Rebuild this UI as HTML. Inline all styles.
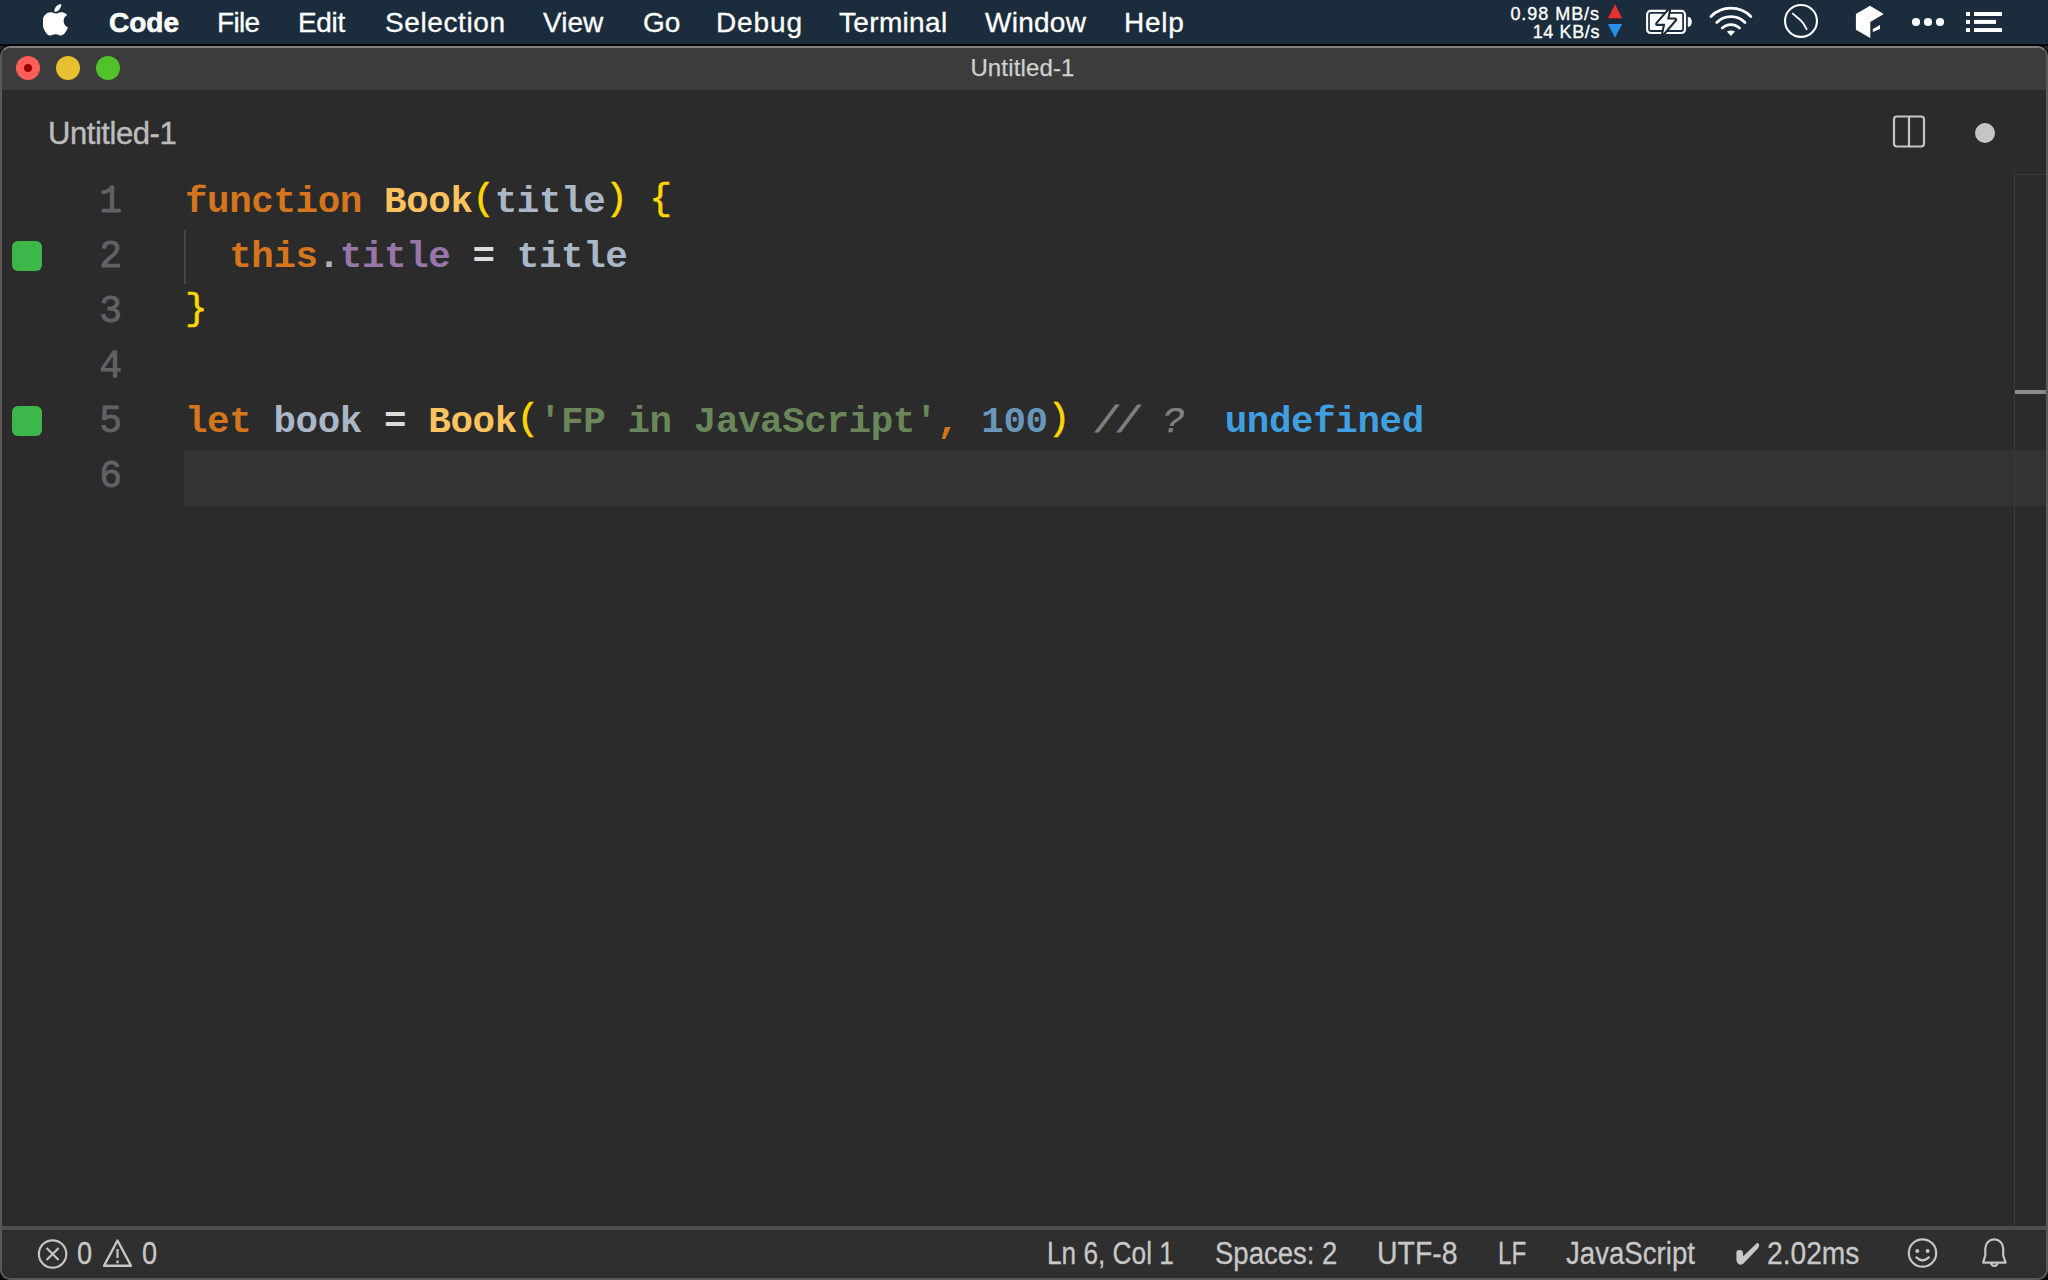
<!DOCTYPE html>
<html><head><meta charset="utf-8">
<style>
html,body{margin:0;padding:0;}
body{width:2048px;height:1280px;position:relative;overflow:hidden;background:linear-gradient(#1b2d3c 0,#1b2d3c 60px,#05080b 60px);font-family:"Liberation Sans",sans-serif;}
.abs{position:absolute;}
#menubar{left:0;top:0;width:2048px;height:44px;background:#1b2d3c;}
.mi{position:absolute;top:1px;height:44px;line-height:44px;font-size:28px;color:#fff;white-space:nowrap;-webkit-text-stroke:0.3px #fff;}
#win{left:0;top:46px;width:2048px;height:1234px;border-radius:10px;box-shadow:0 0 0 1px #000;overflow:hidden;background:#2b2b2b;}
#wintop{left:0;top:0;width:2048px;height:2px;background:#808080;}
#titlebar{left:0;top:2px;width:2048px;height:42px;background:#3c3c3c;}
.tl{position:absolute;width:24px;height:24px;border-radius:50%;top:8px;}
#title{position:absolute;left:-1.5px;width:2048px;text-align:center;top:-1.5px;height:42px;line-height:42px;font-size:24px;color:#d0d0d0;letter-spacing:0.15px;-webkit-text-stroke:0.25px #d0d0d0;}
#editor{left:0;top:44px;width:2048px;height:1136px;background:#2b2b2b;}
#tab{position:absolute;left:48px;top:0.5px;height:85px;line-height:85px;font-size:31px;letter-spacing:-0.45px;color:#bcbcbc;-webkit-text-stroke:0.4px #bcbcbc;}
.code{position:absolute;left:185px;height:55px;line-height:55px;font-family:"Liberation Mono",monospace;font-weight:bold;font-size:37.5px;letter-spacing:-0.385px;white-space:pre;color:#a9b7c6;}
.ln{position:absolute;left:61px;width:61px;margin-top:-1px;text-align:right;height:55px;line-height:55px;font-family:"Liberation Mono",monospace;font-weight:normal;font-size:38px;color:#606366;-webkit-text-stroke:0.8px #606366;}
.gm{position:absolute;left:12px;width:30px;height:30px;border-radius:6px;background:#3cb74a;}
.kw{color:#d5761e}.fn{color:#fdc35f}.br{color:#ffd700;font-weight:normal;position:relative;top:-3px;-webkit-text-stroke:0.6px #ffd700}.pr{color:#9876aa}.st{color:#6a8759}.nm{color:#6897bb}.cm{color:#808080}.qk{color:#409fe0}.op{color:#dcdcdc}
#status{left:0;top:1180px;width:2048px;height:54px;background:#2f2f2f;}
#bborder{left:0;top:1232px;width:2048px;height:2px;background:#5a5a5a;}
.si{position:absolute;top:3px;height:50px;line-height:50px;font-size:31px;color:#c8c8c8;white-space:nowrap;transform-origin:0 0;-webkit-text-stroke:0.3px #c8c8c8;}
#lborder{left:0;top:0;width:2px;height:1234px;background:#5c5c5c;}
#rborder{right:0;top:0;width:2px;height:1234px;background:#585858;}
</style></head><body>
<div id="menubar" class="abs">
  <svg class="abs" style="left:42.5px;top:4px" width="27" height="32" viewBox="0 0 26 32" preserveAspectRatio="none"><path fill="#fff" d="M17.5 0c.3 2-.5 4-1.7 5.4-1.2 1.4-3 2.4-4.8 2.3-.3-1.9.6-3.9 1.7-5.2C13.9 1.1 15.900.2 17.5 0zM23.3 10.900c-.3.2-3.500 2-3.400 6 0 4.700 4.100 6.300 4.100 6.300-.1.3-.7 2.300-2.100 4.500-1.300 1.900-2.700 3.800-4.800 3.800-2.100 0-2.700-1.200-5.100-1.200-2.400 0-3.100 1.200-5 1.300-2 .1-3.500-2-4.800-3.900C-.3 23.800-1.800 16.600 1.100 12.100c1.400-2.300 3.800-3.700 6.400-3.800 2-.1 3.800 1.300 5 1.300s3.100-1.600 5.300-1.400c.9 0 3.500.4 5.500 2.700z"/></svg>
  <div class="mi" style="left:109px;font-weight:bold;-webkit-text-stroke:0.6px #fff">Code</div>
  <div class="mi" style="left:217px;letter-spacing:-0.67px">File</div>
  <div class="mi" style="left:298px;letter-spacing:-0.33px">Edit</div>
  <div class="mi" style="left:385px;letter-spacing:0.6px">Selection</div>
  <div class="mi" style="left:543px">View</div>
  <div class="mi" style="left:643px">Go</div>
  <div class="mi" style="left:716px;letter-spacing:0.87px">Debug</div>
  <div class="mi" style="left:839px;letter-spacing:0.33px">Terminal</div>
  <div class="mi" style="left:985px;letter-spacing:0.27px">Window</div>
  <div class="mi" style="left:1124px;letter-spacing:0.77px">Help</div>

  <div class="abs" style="left:1450px;top:5px;width:150px;text-align:right;font-size:18px;line-height:18px;color:#fff;letter-spacing:0.95px;-webkit-text-stroke:0.35px #fff;white-space:nowrap">0.98 MB/s</div>
  <div class="abs" style="left:1450px;top:23px;width:150px;text-align:right;font-size:18px;line-height:18px;color:#fff;letter-spacing:0.6px;-webkit-text-stroke:0.35px #fff;white-space:nowrap">14 KB/s</div>
  <svg class="abs" style="left:1600px;top:0" width="30" height="44" viewBox="0 0 30 44"><path d="M15 4.2L22.2 18.2H7.9z" fill="#e8302e"/><path d="M7.9 24H22.2L15 37.7z" fill="#2a8fe9"/></svg>
  <svg class="abs" style="left:1640px;top:4px" width="56" height="36" viewBox="0 0 56 36">
    <rect x="7.1" y="6.85" width="37.9" height="22.1" rx="3.5" fill="none" stroke="#fff" stroke-width="2.1"/>
    <rect x="9.85" y="9.7" width="32.35" height="16.2" rx="1" fill="#fff"/>
    <path d="M47.8 12.9h1c1.700 0 3 2.200 3 4.950s-1.300 4.950-3 4.950h-1z" fill="#fff"/>
    <path d="M29 6.2L17.2 19.8H25.3L23.2 29.6L35.2 15.6H27.1z" fill="#fff" stroke="#1b2d3c" stroke-width="4.2" stroke-linejoin="round"/><path d="M29 6.2L17.2 19.8H25.3L23.2 29.6L35.2 15.6H27.1z" fill="#fff"/>
  </svg>
  <svg class="abs" style="left:1705px;top:2px" width="52" height="40" viewBox="0 0 52 40" fill="none" stroke="#fff" stroke-width="2.8" stroke-linecap="round">
    <path d="M17.3 26.1A12.2 12.2 0 0 1 34.5 26.1"/>
    <path d="M11.8 20.4A20 20 0 0 1 40 20.4"/>
    <path d="M6 14.4A28.3 28.3 0 0 1 45.8 14.4"/>
    <path d="M21.9 29.6Q25.9 27.600 30 29.6L25.9 34z" fill="#fff" stroke="none"/>
  </svg>
  <svg class="abs" style="left:1780px;top:0" width="42" height="44" viewBox="0 0 42 44" fill="none" stroke="#fff">
    <circle cx="21" cy="20.9" r="15.95" stroke-width="2.1"/>
    <path d="M12.8 13.6L20 19.8Q22 21.6 23.4 23.6L26.7 29.3" stroke-width="1.8" stroke-linecap="round"/>
  </svg>
  <svg class="abs" style="left:1850px;top:2px" width="40" height="40" viewBox="0 0 40 40" fill="#fff">
    <path d="M20 3.75L33.75 11.9L20.3 20V35.9L5.9 27.8V11.9z"/>
    <path d="M22.8 26.9L30 23.1V26.9L22.8 30z"/>
  </svg>
  <svg class="abs" style="left:1900px;top:0" width="148" height="44" viewBox="0 0 148 44" fill="#fff">
    <circle cx="16" cy="22" r="4.1"/><circle cx="28" cy="22" r="4.1"/><circle cx="40" cy="22" r="4.1"/>
    <rect x="66" y="12" width="4" height="4"/><rect x="66" y="19.9" width="4" height="4"/><rect x="66" y="28.1" width="4" height="3.9"/>
    <rect x="74" y="12" width="28" height="4"/><rect x="74" y="19.9" width="22" height="4"/><rect x="74" y="28.1" width="28" height="3.9"/>
  </svg>
</div>
<div class="abs" style="left:0;top:44px;width:2048px;height:2px;background:#000"></div>
<div id="win" class="abs">
  <div id="titlebar" class="abs">
    <div class="tl" style="left:16px;background:#fe5f57"><div style="position:absolute;left:8px;top:8px;width:8px;height:8px;border-radius:50%;background:#990000"></div></div>
    <div class="tl" style="left:56px;background:#e6c02e"></div>
    <div class="tl" style="left:96px;background:#52c22b"></div>
    <div id="title">Untitled-1</div>
  </div>
  <div id="editor" class="abs">
    <div id="tab">Untitled-1</div>
    <svg class="abs" style="left:1892px;top:25px" width="34" height="34" viewBox="0 0 34 34"><rect x="2" y="1.5" width="30" height="30" rx="3" fill="none" stroke="#c5c5c5" stroke-width="2.2"/><line x1="17" y1="1.5" x2="17" y2="31.5" stroke="#c5c5c5" stroke-width="2.2"/></svg>
    <div class="abs" style="left:1975px;top:33px;width:20px;height:20px;border-radius:50%;background:#c5c5c5"></div>
    <div class="abs" style="left:184px;top:360px;width:1862px;height:56px;background:#333333"></div>
    <div class="abs" style="left:2014px;top:84px;width:32px;height:1px;background:#3c3c3c"></div>
    <div class="abs" style="left:2014px;top:84px;width:1px;height:1052px;background:#3c3c3c"></div>
    <div class="abs" style="left:2015px;top:300px;width:31px;height:4px;background:#8c8c8c"></div>
    <div class="abs" style="left:184px;top:140px;width:2px;height:54px;background:#464646"></div>
    <div class="gm" style="top:151px"></div>
    <div class="gm" style="top:316px"></div>
    <div class="ln" style="top:85px">1</div>
    <div class="ln" style="top:140px">2</div>
    <div class="ln" style="top:195px">3</div>
    <div class="ln" style="top:250px">4</div>
    <div class="ln" style="top:305px">5</div>
    <div class="ln" style="top:360px">6</div>
    <div class="code" style="top:85px"><span class="kw">function</span> <span class="fn">Book</span><span class="br">(</span>title<span class="br">)</span> <span class="br">{</span></div>
    <div class="code" style="top:140px">  <span class="kw">this</span><span style="color:#a9b7c6">.</span><span class="pr">title</span> <span class="op">=</span> title</div>
    <div class="code" style="top:195px"><span class="br">}</span></div>
    <div class="code" style="top:305px"><span class="kw">let</span> book <span class="op">=</span> <span class="fn">Book</span><span class="br">(</span><span class="st">'FP in JavaScript'</span><span class="kw">,</span> <span class="nm">100</span><span class="br">)</span> <span class="cm" style="position:relative;left:3px;font-style:italic;font-weight:normal;-webkit-text-stroke:0.9px #808080">//</span> <span class="cm" style="position:relative;left:4px;font-style:italic;font-weight:normal;-webkit-text-stroke:0.5px #808080">?</span>  <span class="qk">undefined</span></div>
  </div>
  <div id="status" class="abs">
    <div class="abs" style="left:0;top:0;width:2048px;height:4px;background:#4d4d4d"></div>
    <svg class="abs" style="left:36px;top:12px" width="34" height="34" viewBox="0 0 34 34"><circle cx="16.6" cy="16" r="13.7" fill="none" stroke="#c5c5c5" stroke-width="2.2"/><path d="M10.6 10l12 12M22.6 10l-12 12" stroke="#c5c5c5" stroke-width="2.2"/></svg>
    <div class="si" style="left:77px;transform:scaleX(0.876)">0</div>
    <svg class="abs" style="left:101px;top:12px" width="34" height="32" viewBox="0 0 34 32"><path d="M16.5 2.5L3 27.8h27z" fill="none" stroke="#c5c5c5" stroke-width="2.4" stroke-linejoin="round"/><path d="M16.5 11v9" stroke="#c5c5c5" stroke-width="2.2"/><path d="M16.5 22.5v2.7" stroke="#c5c5c5" stroke-width="2.2"/></svg>
    <div class="si" style="left:142px;transform:scaleX(0.876)">0</div>
    <div class="si" style="left:1047px;transform:scaleX(0.846)">Ln 6, Col 1</div>
    <div class="si" style="left:1215px;transform:scaleX(0.888)">Spaces: 2</div>
    <div class="si" style="left:1377px;transform:scaleX(0.917)">UTF-8</div>
    <div class="si" style="left:1498px;transform:scaleX(0.783)">LF</div>
    <div class="si" style="left:1566px;transform:scaleX(0.891)">JavaScript</div>
    <svg class="abs" style="left:1735px;top:12px" width="26" height="30" viewBox="0 0 26 30"><path d="M1.4 14Q1.5 12 4.5 12Q7.5 12 7.8 13.5L8.2 18.2L21.5 5.5Q23 4.5 24 6Q24.3 8.5 23.3 9.9L8.5 25.5Q6 27.5 3.5 26Q1.4 24.5 1.4 22Z" fill="#c8c8c8"/></svg>
    <div class="si" style="left:1767px;transform:scaleX(0.909)">2.02ms</div>
    <svg class="abs" style="left:1905px;top:11px" width="36" height="34" viewBox="0 0 36 34"><circle cx="17.5" cy="16" r="13.7" fill="none" stroke="#c5c5c5" stroke-width="2.2"/><circle cx="12.3" cy="14" r="2" fill="#c5c5c5"/><circle cx="22.6" cy="14" r="2" fill="#c5c5c5"/><path d="M10.8 19.8q6.7 7.2 13.6 0" fill="none" stroke="#c5c5c5" stroke-width="2.2"/></svg>
    <svg class="abs" style="left:1979px;top:12px" width="32" height="34" viewBox="0 0 32 34"><path d="M6.3 10.35A8.95 8.95 0 0 1 24.2 10.35V17.5L26.6 24.6H4.1L6.3 17.5Z" fill="none" stroke="#c5c5c5" stroke-width="2.2" stroke-linejoin="round"/><path d="M12 24.6a3.35 3.35 0 0 0 6.7 0" fill="none" stroke="#c5c5c5" stroke-width="2.2"/></svg>
  </div>
  <div class="abs" style="left:0;top:0;width:2048px;height:1234px;box-sizing:border-box;border:2px solid #5a5a5a;border-top-color:#808080;border-radius:10px"></div>
</div>
</body></html>
